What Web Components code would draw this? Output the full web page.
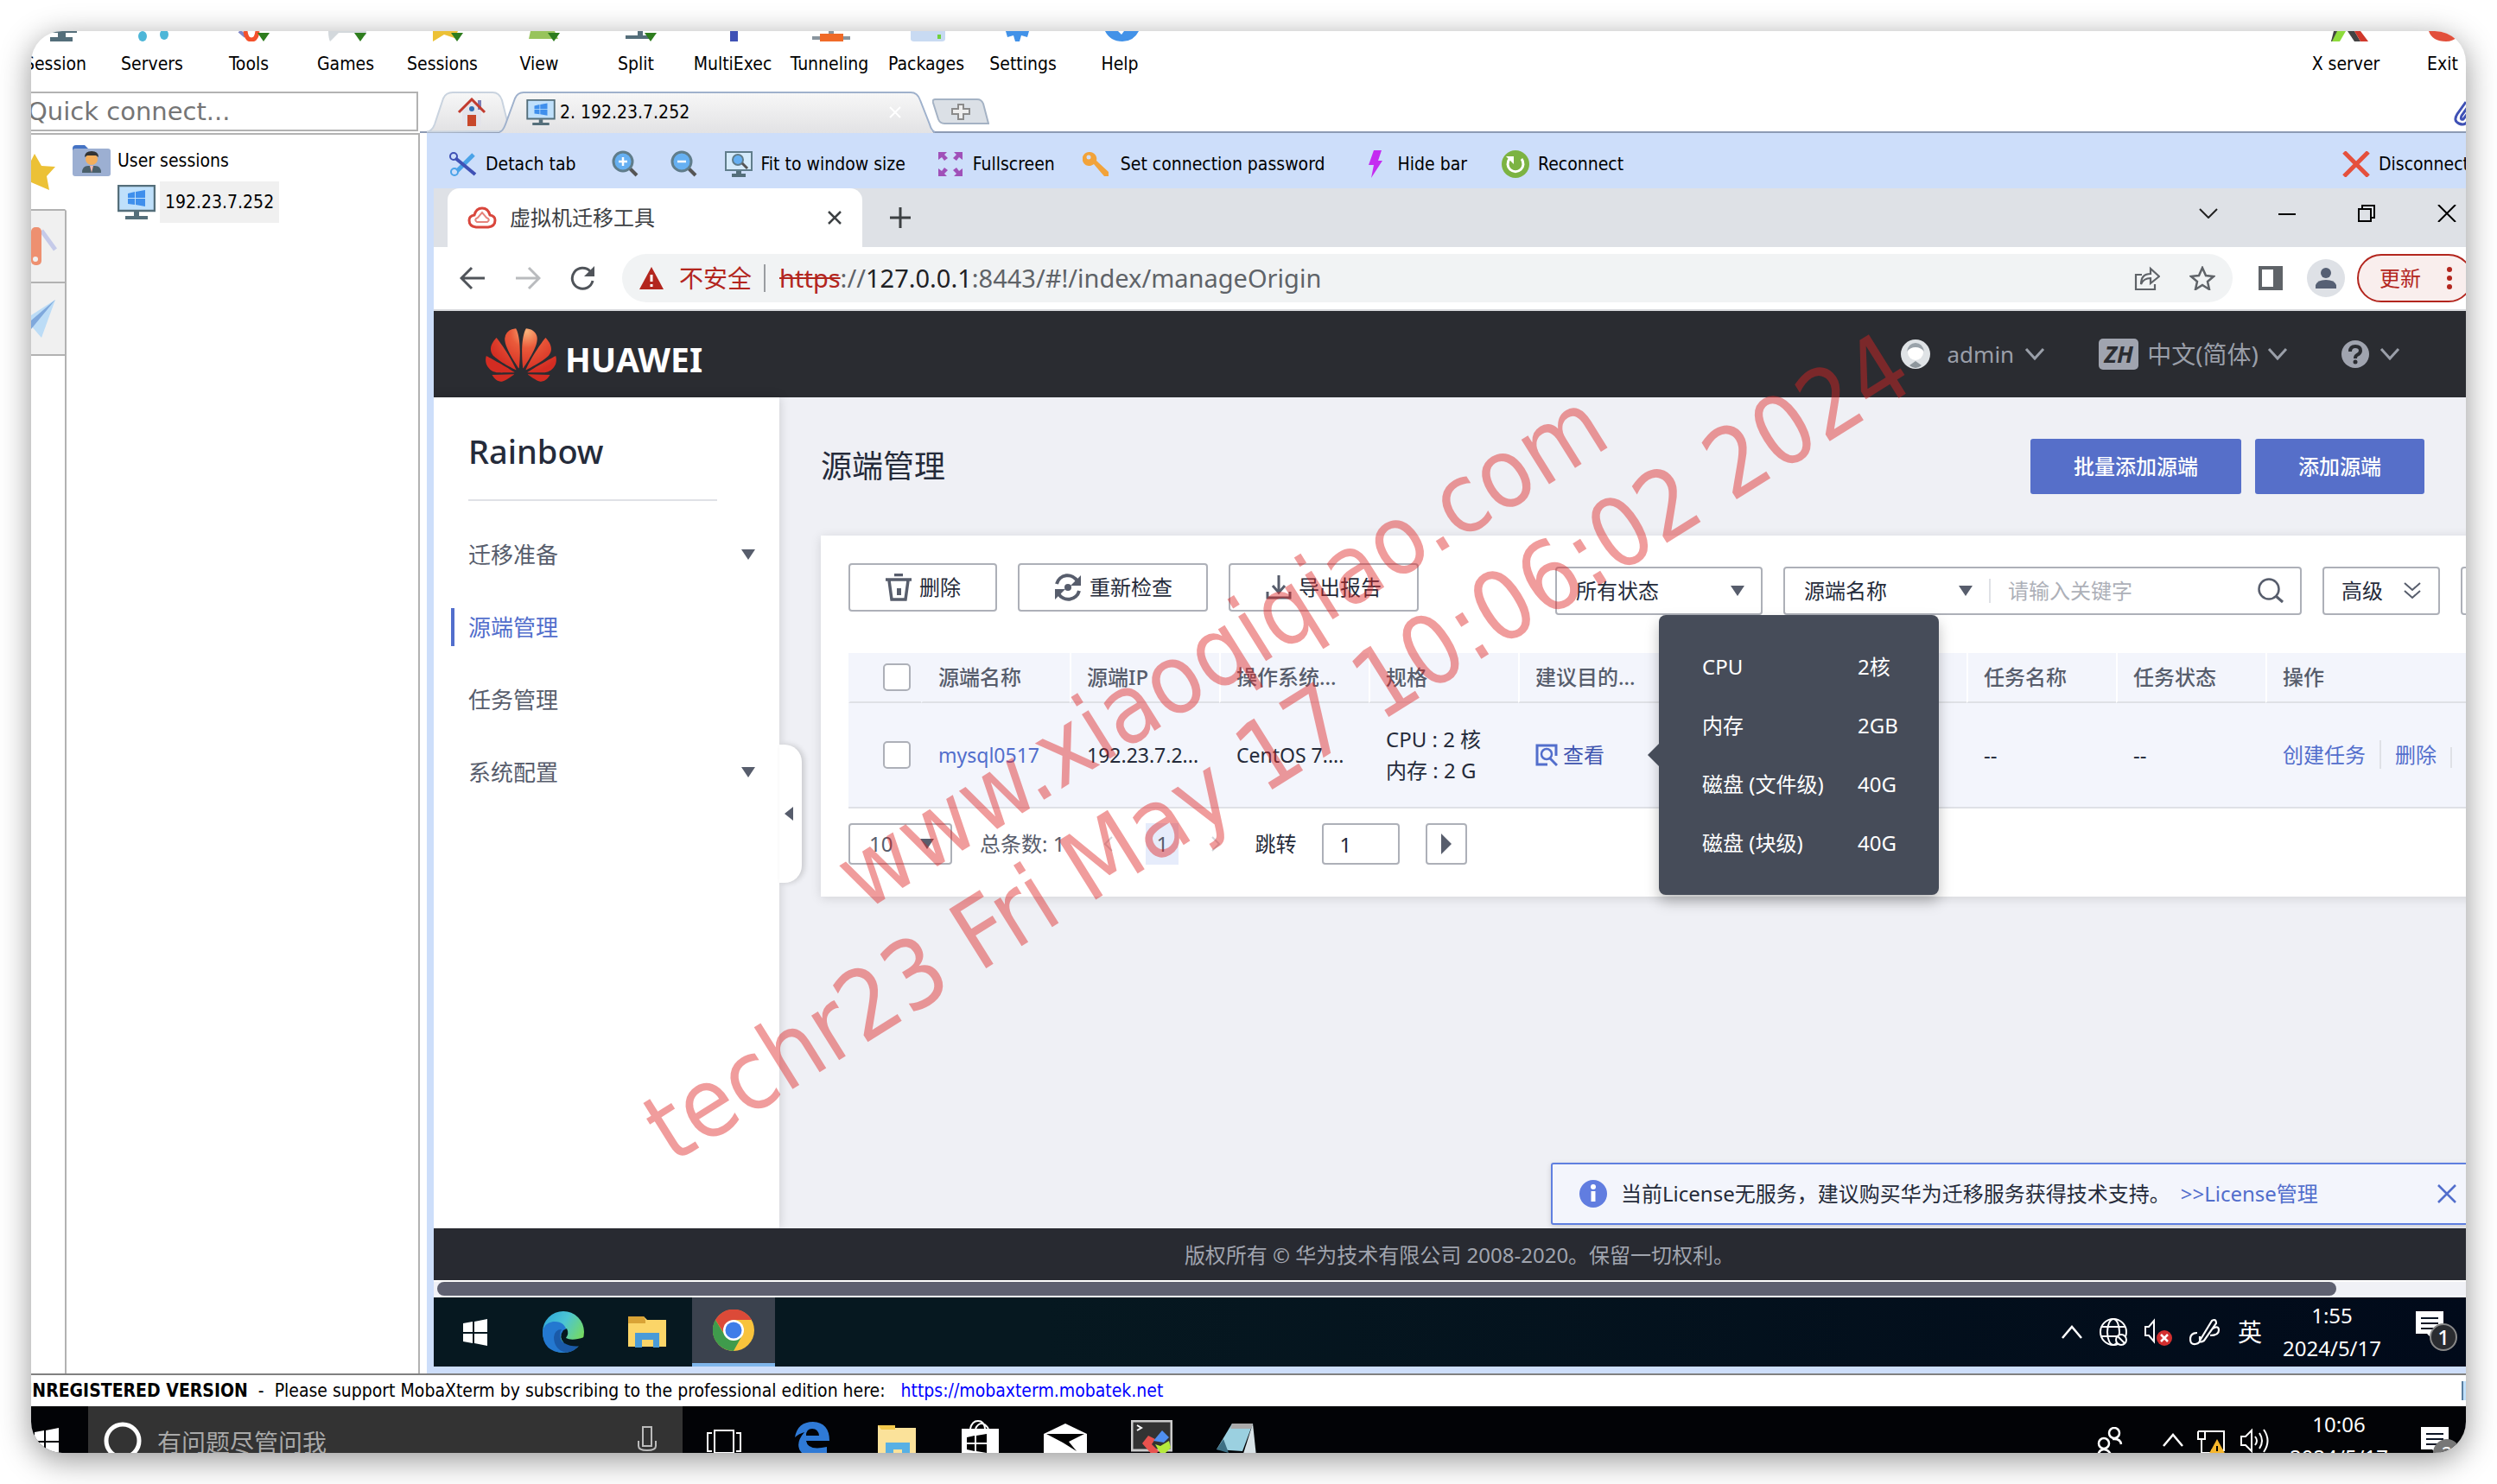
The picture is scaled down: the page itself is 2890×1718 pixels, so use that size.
<!DOCTYPE html>
<html lang="zh-CN">
<head>
<meta charset="utf-8">
<title>MobaXterm - 192.23.7.252</title>
<style>
html{height:100%}
body{margin:0;height:100vh;box-sizing:border-box;padding:36px;background:#fff;overflow:hidden;
--tahoma:"DejaVu Sans Condensed","DejaVu Sans",sans-serif;
--ui:"Noto Sans","Noto Sans CJK SC",sans-serif;
--blue:#cddefa;--link:#526ecc;--ink:#252b3a;--sub:#575d6c;--line:#adb0b8;
font-family:var(--ui);font-size:24px;line-height:32px;color:var(--ink)}
</style>
</head>
<body>
<moba-window></moba-window>
<script>
const base=`<style>*{box-sizing:border-box}svg{display:block;flex:none}
button,input,select{font:inherit;color:inherit;background:none;border:0;padding:0;margin:0;border-radius:0;outline:0}
button{display:flex;align-items:center;white-space:nowrap;flex:none}a{text-decoration:none}</style>`;
function define(name,html){
  const t=document.createElement('template');
  t.innerHTML=base+html;
  customElements.define(name,class extends HTMLElement{
    constructor(){super();this.attachShadow({mode:'open'}).append(t.content.cloneNode(true));}
  });
}
const svg=(w,h,body,box)=>`<svg width="${w}" height="${h}" viewBox="${box||`0 0 ${w} ${h}`}" aria-hidden="true">${body}</svg>`;
const caret=svg(16,12,'<path d="M0 0H16L8 12Z" fill="#575d6c"/>');
const flag='M2 6L13 4V16H2ZM15 4L30 1V16H15ZM2 18H13V29L2 27ZM15 18H30V32L15 29Z';
const monitor=(w,h)=>svg(w,h,`<path d="M1 1H43V30H1Z" fill="#bfe0fb" stroke="#546e7a" stroke-width="2.5"/><path d="M12 10L20 8V15H12ZM21 8L32 6V15H21ZM12 16H20V23L12 22ZM21 16H32V25L21 23Z" fill="#3f8fec"/><path d="M19 31H25V36H35V40H9V36H19Z" fill="#546e7a"/>`,'0 0 44 40');
const down='<path d="M38 2H52L45 12Z" fill="#2e7d1e"/>';

define('tool-item',`<style>:host{display:flex;flex-direction:column;align-items:center;width:112px;flex:none}
button{flex-direction:column;gap:8px;font:21px/36px var(--tahoma);color:#000}</style>
<button><slot name="icon"></slot><slot></slot></button>`);

const tool=(label,art)=>`<tool-item><svg slot="icon" style="display:block" width="56" height="12" viewBox="0 0 56 12" aria-hidden="true">${art}</svg>${label}</tool-item>`;
define('moba-toolbar',`<style>:host{display:flex;justify-content:space-between;height:70px;margin:0 -29px 0 -28px;flex:none}
div{display:flex}</style>
<div>${[
['Session','<path d="M16 0H53V2H40V7H48V12H22V7H31V2H16Z" fill="#546e7a"/>'],
['Servers','<ellipse cx="17" cy="6" rx="5" ry="6" fill="#4db6d8"/><ellipse cx="42" cy="4" rx="5" ry="6" fill="#4db6d8"/>'],
['Tools','<path d="M17 0L24 6" stroke="#8087c8" stroke-width="4"/><path d="M24 0Q25 10 31 10T38 0" fill="none" stroke="#f4512c" stroke-width="5"/>'+down],
['Games','<path d="M8 0H52V4Q46 10 40 2H20L10 12Q8 8 8 0Z" fill="#d3d8dc"/>'+down],
['Sessions','<path d="M17 0H46L42 8L30 4L17 12Z" fill="#ecc136"/>'+down],
['View','<path d="M18 0H46L50 9H16Z" fill="#98c45c"/>'+down],
['Split','<path d="M30 0H36V5H44V9H16V5H30Z" fill="#546e7a"/>'+down],
['MultiExec','<path d="M25 0H34V12H25Z" fill="#3f51b5"/>'],
['Tunneling','<path d="M8 6H52V10H8ZM27 0H33V4H27Z" fill="#8a959e"/><rect x="17" y="3" width="27" height="9" fill="#f06a28"/>'],
['Packages','<path d="M10 0H50V9Q50 12 46 12H14Q10 12 10 9Z" fill="#c8daf2"/><path d="M41 4H45V9H41Z" fill="#6fd13c"/>'],
['Settings','<path d="M8 0H35L33 7L26 5L24 12H19L17 5L10 7Z" fill="#4292e8"/>'],
['Help','<path d="M11 0H26L30 4L33 0H50Q44 12 31 12Q17 12 11 0Z" fill="#4292e8"/>']
].map(a=>tool(...a)).join('')}</div>
<div>${tool('X server','<path d="M16 0H28L21 12H11Z" fill="#8edb3c"/><path d="M14 0H18L12 12H11Z" fill="#444"/><path d="M30 0H38L45 12H38Z" fill="#444"/><path d="M38 0H45L54 12H45Z" fill="#d0382c"/>')}${tool('Exit','<path d="M12 0Q16 12 32 12Q40 12 46 6L40 0Z" fill="#e2503c"/>')}</div>`);

define('session-panel',`<style>:host{display:flex;flex-direction:column;width:450px;flex:none;color:#000;font:21px/48px var(--tahoma)}
input{width:452px;height:46px;border:2px solid #b2b2b2;border-left:0;font:29px/40px "DejaVu Sans",sans-serif;background:#fff;margin-left:-4px}
input::placeholder{color:#757575;opacity:1}
form{margin:0;height:48px;display:flex}
.panel{flex:1;display:flex;border:solid #b2b2b2;border-width:2px 2px 0 0}
.rail{width:41px;display:flex;flex-direction:column}
.rail button{height:84px;width:41px;background:#f0f0f0;border:solid #b2b2b2;border-width:0 2px 2px 0;overflow:hidden}
.rail button:first-child{height:88px;background:#fff;border-right-color:#fff}
.rail i{flex:1;border-right:2px solid #b2b2b2}
.tree{flex:1;padding:6px 0 0 7px;margin:0;list-style:none}
.tree div{display:flex;align-items:center;gap:8px;height:48px}
.tree .leaf{padding-left:52px;gap:5px}
.leaf span{background:#f0f0f0;padding:0 6px}</style>
<form><input aria-label="Quick connect" placeholder="Quick connect..."></form>
<div class="panel"><nav class="rail" aria-label="Side tabs">
<button aria-label="Sessions">${svg(28,42,'<path d="M4 0L12 14L28 15L18 26L21 42L0 33V8Z" fill="#ecc136"/>')}</button>
<button aria-label="Tools">${svg(30,48,'<path d="M12 6L28 28" stroke="#c5cae9" stroke-width="5"/><rect x="0" y="2" width="12" height="44" rx="5" fill="#ee9070"/><circle cx="5" cy="39" r="3" fill="#f0f0f0"/>')}</button>
<button aria-label="Macros">${svg(28,44,'<path d="M28 0L12 44L0 30V18Z" fill="#bcdcf6"/><path d="M28 0L0 34V24Z" fill="#7fa8dc"/>')}</button><i></i></nav>
<div class="tree" role="tree"><div role="treeitem">${svg(44,36,'<path d="M0 4Q0 0 4 0H14L18 4V12H0Z" fill="#4573c4"/><rect y="4" width="44" height="32" rx="3" fill="#9cafd2"/><circle cx="22" cy="16" r="7" fill="#f3ae5c"/><path d="M14 14Q14 7 22 7T30 14L27 12H17Z" fill="#333"/><path d="M11 32Q11 24 18 24H26Q33 24 33 32Z" fill="#4a5f6a"/><path d="M20 24H24L22 32Z" fill="#f4b8b0"/>')}<span>User sessions</span></div>
<div class="leaf" role="treeitem">${monitor(44,40)}<span>192.23.7.252</span></div></div></div>`);

define('moba-tabs',`<style>:host{display:flex;height:48px;flex:none;background:linear-gradient(#8d9bb4,#8d9bb4) bottom/100% 2px no-repeat #fff;padding-left:8px;color:#000;font:21px/48px var(--tahoma)}
.tab{display:grid;flex:none}.tab>*{grid-area:1/1}
.home{width:96px}.act{width:506px;margin-left:-14px}
.home button{justify-content:center;padding-left:8px}
.act .in{display:flex;align-items:center;gap:5px;padding:0 39px 0 33px}
.act .in button{margin-left:auto}
.add{margin:8px 0 0 -3px;align-self:flex-start}.clip{margin-left:auto;align-self:center;overflow:hidden;width:14px}</style>
<div class="tab home">${svg(96,48,'<defs><linearGradient id="g" x2="0" y2="1"><stop stop-color="#f7f7f7"/><stop offset="1" stop-color="#e2e2e4"/></linearGradient></defs><path d="M0 46.500Q6 46 9 38L19 8Q22 1 30 1H76Q84 1 87 10L96 46Z" fill="url(#g)" stroke="#c9d3df" stroke-width="2"/>')}<button aria-label="Home">${svg(34,34,'<path d="M6 14L17 4L28 14V33H6Z" fill="#e4e4ea"/><path d="M24 3H28V14H24Z" fill="#7d7fb8"/><path d="M2 17L17 2L32 17" fill="none" stroke="#c23b2e" stroke-width="3"/><rect x="12" y="20" width="10" height="13" fill="#c8482a"/><circle cx="17" cy="13" r="3" fill="#2f6fb5"/>')}</button></div>
<div class="tab act">${svg(506,48,'<defs><linearGradient id="g" x2="0" y2="1"><stop stop-color="#d9e7ff"/><stop offset="1" stop-color="#cddefa"/></linearGradient></defs><path d="M0 49Q6 46 9 38L20 8Q23 1 30 1H478Q486 1 489 10L500 38Q502 47 506 49Z" fill="url(#g)"/><path d="M2 47Q6 46 9 38L20 8Q23 1 30 1H478Q486 1 489 10L500 38Q502 45 506 47" fill="none" stroke="#9fb1cc" stroke-width="2"/>')}<div class="in">${monitor(34,30)}<span>2. 192.23.7.252</span><button aria-label="Close tab">${svg(14,14,'<path d="M1 1L13 13M13 1L1 13" stroke="#fff" stroke-width="2"/>')}</button></div></div>
<button class="add" aria-label="New tab">${svg(66,30,'<path d="M3 1H52Q57 1 59 6L65 29H14Q9 29 7 24L1 5Q0 1 3 1Z" fill="#dbe0e6" stroke="#a4b2c4" stroke-width="2"/><path d="M30 7H36V12H43V18H36V24H30V18H23V12H30Z" fill="#eee" stroke="#8b8b8b" stroke-width="2"/>')}</button>
<span class="clip">${svg(28,32,'<path d="M14 4L4 18Q-1 26 6 29T16 26L26 10M16 10L9 20Q7 25 11 24L20 12" fill="none" stroke="#3f51b5" stroke-width="3"/>')}</span>`);

define('rdp-bar',`<style>:host{display:flex;align-items:center;height:64px;flex:none;padding:8px 0 0 26px;background:var(--blue);color:#000;font:21px/48px var(--tahoma);overflow:hidden}
button{gap:10px;margin-right:36px}.tight{margin-right:32px}.wide{margin-right:40px}.key{gap:14px;margin-right:48px}.k{gap:16px}.d{margin:0 -4px 0 auto}</style>
<button class="wide">${svg(32,28,'<path d="M28 3L9 22" stroke="#4aa3e8" stroke-width="5"/><path d="M7 7L30 26" stroke="#3f51b5" stroke-width="4"/><circle cx="5" cy="5" r="4" fill="none" stroke="#3f51b5" stroke-width="2"/><circle cx="6" cy="23" r="4" fill="none" stroke="#4aa3e8" stroke-width="2"/>')}Detach tab</button>
<button aria-label="Zoom in">${svg(32,32,'<path d="M22 21L30 29" stroke="#555" stroke-width="4"/><circle cx="14" cy="13" r="11" fill="#66b0f2" stroke="#607d8b" stroke-width="3"/><path d="M14 8V18M9 13H19" stroke="#fff" stroke-width="2.500"/>')}</button>
<button class="tight" aria-label="Zoom out">${svg(32,32,'<path d="M22 21L30 29" stroke="#555" stroke-width="4"/><circle cx="14" cy="13" r="11" fill="#66b0f2" stroke="#607d8b" stroke-width="3"/><path d="M9 13H19" stroke="#fff" stroke-width="2.500"/>')}</button>
<button>${svg(32,30,'<rect x="1" y="1" width="30" height="21" fill="#d5ebfb" stroke="#607d8b" stroke-width="2"/><path d="M13 23H19V26H24V30H8V26H13Z" fill="#546e7a"/><circle cx="15" cy="10" r="6" fill="#66b0f2" stroke="#607d8b" stroke-width="2"/><path d="M20 14L26 20" stroke="#555" stroke-width="3"/>')}Fit to window size</button>
<button class="tight">${svg(32,28,'<path d="M2 0H12L9 3L13 7L9 10L6 6L2 9ZM30 0H20L23 3L19 7L23 10L26 6L30 9ZM2 28H12L9 25L13 21L9 18L6 22L2 19ZM30 28H20L23 25L19 21L23 18L26 22L30 19Z" fill="#a050b8"/>')}Fullscreen</button>
<button class="key">${svg(30,28,'<path d="M8 0A8 8 0 0 1 16 10L30 23V28H25L13 14A8 8 0 1 1 8 0Z" fill="#f2a33a"/><circle cx="7" cy="6" r="2.500" fill="#cddefa"/>')}Set connection password</button>
<button class="k wide">${svg(20,32,'<path d="M8 0H17L13 12H18L5 32L8 17H2Z" fill="#c42cf0"/>')}Hide bar</button>
<button>${svg(32,32,'<circle cx="16" cy="16" r="16" fill="#7cb342"/><path d="M9 10A9 9 0 1 0 23 10" fill="none" stroke="#fff" stroke-width="3"/><path d="M5 7H14V16Z" fill="#fff"/>')}Reconnect</button>
<button class="d">${svg(32,30,'<path d="M2 1L30 29M30 1L2 29" stroke="#e5503c" stroke-width="5"/>')}Disconnect</button>`);

define('chrome-tabs',`<style>:host{display:flex;align-items:center;height:68px;flex:none;background:#dee1e6;padding-left:16px;color:#3c4043}
.tab{display:flex;align-items:center;align-self:stretch;width:480px;background:#fff;border-radius:14px 14px 0 0;padding:0 23px 0 23px;gap:15px}
.tab button{margin-left:auto}
.new{margin-left:32px}.win{margin-left:auto;display:flex;gap:70px;padding:0 11px 10px 0;color:#111}</style>
<div class="tab">${svg(34,26,'<path d="M10 24Q2 23 2 16Q2 11 8 10Q10 2 17 2T26 10Q32 11 32 16Q32 23 24 24Z" fill="none" stroke="#d9463c" stroke-width="3"/><path d="M11 18Q7 15 12 13L17 7L22 13Q27 15 23 18Z" fill="#fff" stroke="#e6857d" stroke-width="2"/>')}<span>虚拟机迁移工具</span><button aria-label="Close">${svg(18,18,'<path d="M2 2L16 16M16 2L2 16" stroke="#3c4043" stroke-width="2.500"/>')}</button></div>
<button class="new" aria-label="New tab">${svg(24,24,'<path d="M12 0V24M0 12H24" stroke="#3c4043" stroke-width="3"/>')}</button>
<div class="win"><button aria-label="Search tabs">${svg(22,12,'<path d="M1 1L11 11L21 1" fill="none" stroke="#222" stroke-width="2"/>')}</button><button aria-label="Minimize">${svg(22,20,'<path d="M0 11H20" stroke="#000" stroke-width="2"/>')}</button><button aria-label="Restore">${svg(22,20,'<path d="M1 5H15V19H1ZM5 5V1H19V15H15" fill="none" stroke="#000" stroke-width="2"/>')}</button><button aria-label="Close window">${svg(22,20,'<path d="M1 0L21 20M21 0L1 20" stroke="#000" stroke-width="2"/>')}</button></div>`);

define('chrome-address',`<style>:host{display:flex;align-items:center;height:74px;flex:none;background:#fff;border-bottom:2px solid #d8dadd;padding-left:30px;overflow:hidden}
.nav{display:flex;gap:34px;margin-right:30px}
.omni{flex:1;display:flex;align-items:center;height:56px;border-radius:28px;background:#f1f3f4;padding:0 20px 0 20px;font-size:28px;color:#5f6368;white-space:nowrap}
.warn{margin-right:18px}.bad{color:#b3261e}.sep{width:2px;height:32px;background:#9a9da1;margin:0 16px 0 14px}
.url{flex:1;font-size:29px}.url b{font-weight:400;color:#202124}.url s{color:#b3261e}
.omni button+button{margin-left:34px}
.panel{margin:0 28px 0 30px}.me{margin-right:14px}
.up{height:56px;width:134px;border:2px solid #b3261e;border-radius:28px;background:#f9eeed;color:#b3261e;padding-left:24px;gap:30px;margin-right:-8px}</style>
<div class="nav"><button aria-label="Back">${svg(30,28,'<path d="M29 14H3M14 2L2 14L14 26" fill="none" stroke="#50545a" stroke-width="3"/>')}</button><button aria-label="Forward">${svg(30,28,'<path d="M1 14H27M16 2L28 14L16 26" fill="none" stroke="#b9bbbe" stroke-width="3"/>')}</button><button aria-label="Reload">${svg(30,28,'<path d="M26 17A12 12 0 1 1 23 6" fill="none" stroke="#50545a" stroke-width="3"/><path d="M28 0V12H16Z" fill="#50545a"/>')}</button></div>
<div class="omni" role="group" aria-label="Address"><span class="warn">${svg(28,26,'<path d="M14 0L28 26H0Z" fill="#b3261e"/><path d="M14 9V17M14 20V23" stroke="#fff" stroke-width="3"/>')}</span><span class="bad">不安全</span><span class="sep"></span><span class="url"><s>https</s>://<b>127.0.0.1</b>:8443/#!/index/manageOrigin</span>
<button aria-label="Share">${svg(30,30,'<path d="M9 11H2V28H24V22M8 22Q8 10 19 10V4L29 13L19 21V15Q11 15 8 22Z" fill="none" stroke="#5f6368" stroke-width="2.200"/>')}</button><button aria-label="Bookmark">${svg(30,28,'<path d="M15 2L19 11L28 12L21 18L23 27L15 22L7 27L9 18L2 12L11 11Z" fill="none" stroke="#5f6368" stroke-width="2.500"/>')}</button></div>
<button class="panel" aria-label="Side panel">${svg(28,28,'<path d="M0 0H28V28H0ZM4 4V24H17V4Z" fill="#5f6368" fill-rule="evenodd"/>')}</button>
<button class="me" aria-label="Profile">${svg(44,44,'<circle cx="22" cy="22" r="22" fill="#dee1e6"/><circle cx="22" cy="16" r="6" fill="#566074"/><path d="M10 34V30Q12 24 22 24T34 30V34Z" fill="#566074"/>')}</button>
<button class="up">更新${svg(6,28,'<circle cx="3" cy="4" r="3" fill="#b3261e"/><circle cx="3" cy="14" r="3" fill="#b3261e"/><circle cx="3" cy="24" r="3" fill="#b3261e"/>')}</button>`);

const chev=svg(24,16,'<path d="M2 2L12 13L22 2" fill="none" stroke="#9a9fa9" stroke-width="3"/>');
define('hw-header',`<style>:host{display:flex;align-items:center;justify-content:space-between;height:100px;flex:none;background:#2a2c31;color:#9a9fa9;padding:0 76px 0 60px;font-size:26px}
.logo{display:flex;align-items:center;gap:10px;color:#fff;padding-top:2px}
.logo b{font:700 39px/40px "Noto Sans",sans-serif;padding-top:10px}
.right{display:flex;gap:62px}.right button{gap:12px}.right .lang{gap:10px;font-size:28px}
i{font:italic 700 27px/36px "Noto Sans",sans-serif;background:#a0a4af;color:#2a2c31;border-radius:5px;width:46px;text-align:center}</style>
<div class="logo">${svg(82,62,'<defs><radialGradient id="h" gradientUnits="userSpaceOnUse" cx="14" cy="4" r="14"><stop stop-color="#fbb27a"/><stop offset=".4" stop-color="#ea5a3a"/><stop offset="1" stop-color="#d32c22"/></radialGradient></defs><path fill="url(#h)" d="M3.670 6.140S1.820 7.910 1.720 9.780v.350c.080 1.510 1.220 2.400 1.220 2.400 1.830 1.790 6.260 4.040 7.300 4.550 0 0 .060.030.100-.010l.020-.040v-.040C7.520 10.800 3.670 6.140 3.670 6.140zM9.650 18.600c-.020-.080-.100-.080-.100-.080l-7.380.260c.800 1.430 2.150 2.530 3.560 2.200.960-.250 3.160-1.780 3.880-2.300.060-.050.040-.090.040-.090zm.080-.780C6.490 15.630.210 12.280.210 12.280c-.150.460-.200.900-.210 1.300v.070c0 1.070.400 1.820.400 1.820.800 1.690 2.340 2.200 2.340 2.200.700.300 1.400.310 1.400.310.120.020 4.400 0 5.540 0 .050 0 .080-.050.080-.050v-.060c0-.030-.030-.050-.030-.050zM9.060 3.190a3.420 3.420 0 00-2.570 3.150v.410c.030.600.160 1.050.160 1.050.660 2.900 3.860 7.650 4.550 8.650.050.050.100.030.100.030a.100.100 0 00.060-.100c1.060-10.600-1.110-13.420-1.110-13.420-.320.020-1.190.230-1.190.230zm8.299 2.270s-.490-1.800-2.440-2.280c0 0-.570-.140-1.170-.220 0 0-2.180 2.810-1.120 13.430.010.070.060.080.060.080.070.030.100-.030.100-.030.720-1.030 3.900-5.760 4.550-8.640 0 0 .360-1.400.020-2.340zm-2.920 13.070s-.070 0-.090.050c0 0-.010.070.030.100.700.510 2.850 2 3.880 2.300 0 0 .160.050.430.060h.140c.690-.020 1.900-.370 3-2.260l-7.400-.250zm7.830-8.410c.140-2.060-1.940-3.970-1.940-3.980 0 0-3.850 4.660-6.670 10.800 0 0-.030.080.020.130l.040.010h.060c1.060-.530 5.460-2.770 7.280-4.540 0 0 1.150-.930 1.210-2.420zm1.520 2.140s-6.280 3.370-9.520 5.550c0 0-.050.040-.030.110 0 0 .030.060.070.060 1.160 0 5.560 0 5.670-.020 0 0 .570-.020 1.270-.290 0 0 1.560-.500 2.370-2.270 0 0 .730-1.450.170-3.140z"/>','0 2.900 24 18.200')}<b>HUAWEI</b></div>
<div class="right"><button>${svg(42,34,'<circle cx="17" cy="17" r="17" fill="#dfe3e6"/><circle cx="17" cy="15" r="9" fill="#fff"/><path d="M7 14Q9 4 17 4T27 14Q23 9 17 9T7 14Z" fill="#9aa3aa"/><path d="M10 30L17 25L24 30Q17 36 10 30Z" fill="#8d969c"/>')}admin${chev}</button>
<button class="lang"><i>ZH</i>中文(简体)${chev}</button>
<button aria-label="Help">${svg(32,32,'<circle cx="16" cy="16" r="16" fill="#a0a4af"/><path d="M10 13Q10 7 16 7T22 12Q22 15 18 17Q16 18 16 21" fill="none" stroke="#2a2c31" stroke-width="4"/><circle cx="16" cy="25" r="2.500" fill="#2a2c31"/>')}${chev}</button></div>`);

define('hw-sidebar',`<style>:host{display:block;position:relative;z-index:1;width:400px;flex:none;background:#fff;box-shadow:0 0 12px rgba(0,0,0,.16);padding-top:30px;color:var(--sub)}
h1{font:500 38px/64px var(--ui);color:var(--ink);margin:0 72px 20px 40px;padding-bottom:24px;border-bottom:2px solid #dfe1e6}
a{display:flex;align-items:center;justify-content:space-between;height:84px;padding:0 28px 0 40px;font-size:26px;color:inherit}
a.on{color:var(--link);background:linear-gradient(var(--link),var(--link)) 20px center/4px 44px no-repeat}
.fold{position:absolute;left:100%;top:402px;width:26px;height:160px;background:#fff;border-radius:0 20px 20px 0;box-shadow:3px 0 6px rgba(0,0,0,.16);padding-left:6px}</style>
<h1>Rainbow</h1>
<nav><a href="#prepare">迁移准备${caret}</a><a class="on" href="#origin">源端管理</a><a href="#task">任务管理</a><a href="#config">系统配置${caret}</a></nav>
<button class="fold" aria-label="Collapse">${svg(10,16,'<path d="M10 0V16L0 8Z" fill="#575d6c"/>')}</button>`);

define('drop-down',`<style>:host{display:grid;align-items:center;justify-items:end;height:56px;border:2px solid var(--line);border-radius:4px;background:#fff}
::slotted(select){grid-area:1/1;width:100%;height:100%;appearance:none}
svg{grid-area:1/1;margin-right:19px;pointer-events:none}</style><slot></slot>${caret}`);

define('info-tip',`<style>:host{display:block;position:absolute;z-index:3;left:1418px;top:352px;width:324px;padding:26px 0 26px 50px;background:#464c59;color:#fff;border-radius:8px;box-shadow:0 8px 16px rgba(0,0,0,.25);line-height:68px}
:host::before{content:"";position:absolute;right:100%;top:149px;border:solid transparent;border-width:13px 13px 13px 0;border-right-color:#464c59}
dl{display:grid;grid-template-columns:180px 1fr;margin:0}dd{margin:0}dt,dd{white-space:nowrap}</style>
<dl><dt>CPU</dt><dd>2核</dd><dt>内存</dt><dd>2GB</dd><dt>磁盘 (文件级)</dt><dd>40G</dd><dt>磁盘 (块级)</dt><dd>40G</dd></dl>`);

define('license-notice',`<style>:host{display:flex;align-items:center;position:absolute;z-index:2;right:-2px;bottom:4px;width:1061px;height:72px;background:#f3f5fc;border:2px solid #5f7fe0;border-radius:3px 0 0 3px;padding:0 11px 0 31px;box-shadow:0 2px 6px rgba(0,0,0,.15);white-space:nowrap}
span{margin:0 12px 0 16px}a{color:var(--link)}button{margin-left:auto}</style>
${svg(32,32,'<circle cx="16" cy="16" r="16" fill="#617de0"/><path d="M16 13V25" stroke="#fff" stroke-width="5"/><circle cx="16" cy="8" r="3" fill="#fff"/>')}<span>当前License无服务，建议购买华为迁移服务获得技术支持。</span><a href="#license">&gt;&gt;License管理</a><button aria-label="Dismiss">${svg(22,22,'<path d="M1 1L21 21M21 1L1 21" stroke="#526ecc" stroke-width="2.500"/>')}</button>`);

define('source-table',`<style>:host{display:block}
table{width:100%;table-layout:fixed;border-collapse:separate;border-spacing:0;background:#f3f5fc}
th,td{text-align:left;padding:0 0 0 18px;white-space:nowrap;border-bottom:2px solid #dfe1e6}
th{height:58px;font-weight:500;color:var(--sub);border-left:2px solid #fff}
th:first-child,th:nth-child(2){border-left:2px solid transparent}td{height:122px;padding-left:20px;line-height:36px}
td:nth-child(-n+4){font-size:23px}
th:first-child{padding-left:38px}td:first-child{padding-left:40px}
input{appearance:none;display:block;width:32px;height:32px;border:2px solid var(--line);border-radius:5px;background:#fff}
a{color:var(--link)}.ops a+a{border-left:2px solid #dfe1e6;margin-left:16px;padding-left:16px;line-height:24px}
.ops a:last-child{display:inline-block;height:24px;vertical-align:middle;padding:0}
.see{display:flex;gap:6px;align-items:center;color:#3f55b0}</style>
<table><colgroup><col style="width:84px"><col style="width:172px">${'<col style="width:173px">'.repeat(8)}<col></colgroup>
<thead><tr><th><input type="checkbox" aria-label="全选"></th><th>源端名称</th><th>源端IP</th><th>操作系统...</th><th>规格</th><th>建议目的...</th><th></th><th></th><th>任务名称</th><th>任务状态</th><th>操作</th></tr></thead>
<tbody><tr><td><input type="checkbox" aria-label="mysql0517"></td><td><a href="#mysql0517">mysql0517</a></td><td>192.23.7.2...</td><td>CentOS 7....</td><td>CPU : 2 核<br>内存 : 2 G</td><td><a class="see" href="#view">${svg(26,26,'<path d="M24 14V2H2V24H14" fill="none" stroke="#526ecc" stroke-width="3"/><circle cx="13" cy="12" r="6" fill="none" stroke="#526ecc" stroke-width="2.500"/><path d="M17 17L25 25" stroke="#526ecc" stroke-width="3"/>')}查看</a></td><td></td><td></td><td>--</td><td>--</td><td class="ops"><a href="#create">创建任务</a><a href="#delete">删除</a><a aria-hidden="true"></a></td></tr></tbody></table>`);

define('hw-main',`<style>:host{display:flex;flex-direction:column;position:relative;flex:1;min-width:0;background:#eff0f5;padding:0 0 0 48px}
header{display:flex;align-items:center;height:160px;padding:0 48px 0 0;flex:none}
h2{font:400 36px/64px var(--ui);margin:0 auto 0 0}
header button{height:64px;border-radius:3px;background:#566fc9;color:#fff;font-weight:500;padding:0 50px;margin-left:16px}
.card{background:#fff;margin-right:-80px;padding:32px 30px 36px 32px;box-shadow:0 2px 12px rgba(0,0,0,.12)}
.bar{display:flex;height:60px;gap:24px;margin-bottom:44px}
.bar>button{height:56px;border:2px solid var(--line);border-radius:4px;justify-content:center;gap:8px;width:220px}
.bar>button:first-child{width:172px}
.bar>.f{align-self:flex-end}
.bar>.more{width:136px;gap:24px}.bar>.last{width:56px}
select{padding-left:22px}
.st{width:240px;margin-left:auto}
.search{display:flex;align-items:center;width:600px;height:56px;border:2px solid var(--line);border-radius:4px;padding-right:19px}
.search drop-down{border:0;width:236px;height:52px}
.search input{flex:1;min-width:0;height:28px;border-left:2px solid #dfe1e6;padding-left:20px}
.search input::placeholder{color:#adb0b8;opacity:1}
.pager{display:flex;align-items:center;margin-top:16px;height:50px;color:var(--sub)}
.size{width:120px;height:48px}.total{margin:0 32px}
.pager button.p{width:38px;height:48px;justify-content:center}
.cur{background:#e6ecfb;margin:0 24px}
.go,.jump{border:2px solid var(--line)!important;border-radius:4px;height:48px;background:#fff}
.jump{width:90px;padding-left:18px;margin:0 30px}.go{width:48px;justify-content:center}label{display:flex;align-items:center;margin-left:26px;color:var(--ink)}</style>
<header><h2>源端管理</h2><button>批量添加源端</button><button>添加源端</button></header>
<section class="card"><div class="bar">
<button>${svg(32,32,'<path d="M11 1.500H21M1 7H31M5 8L8 30H24L27 8" fill="none" stroke="#575d6c" stroke-width="3.500"/><rect x="14" y="17" width="5" height="8" fill="#575d6c"/>')}删除</button>
<button>${svg(34,32,'<path d="M4 12A13 13 0 0 1 28 9M30 20A13 13 0 0 1 6 23" fill="none" stroke="#575d6c" stroke-width="4"/><path d="M32 2V14H20ZM2 30V18H14Z" fill="#575d6c"/><circle cx="17" cy="16" r="4" fill="#575d6c"/>')}重新检查</button>
<button>${svg(30,28,'<path d="M15 0V19M8 12L15 20L22 12M2 19V26H28V19" fill="none" stroke="#575d6c" stroke-width="3"/>')}导出报告</button>
<drop-down class="f st"><select aria-label="状态"><option>所有状态</option></select></drop-down>
<div class="search f"><drop-down><select aria-label="搜索字段"><option>源端名称</option></select></drop-down><input aria-label="关键字" placeholder="请输入关键字">${svg(30,30,'<circle cx="13" cy="13" r="11.500" fill="none" stroke="#575d6c" stroke-width="2.500"/><path d="M21 21L29 28" stroke="#575d6c" stroke-width="3"/>')}</div>
<button class="f more">高级${svg(20,20,'<path d="M1 1L10 9L19 1M1 10L10 18L19 10" fill="none" stroke="#575d6c" stroke-width="2"/>')}</button><button class="f last" aria-label="刷新"></button></div>
<source-table></source-table>
<div class="pager"><drop-down class="size"><select aria-label="每页条数"><option>10</option></select></drop-down><span class="total">总条数: 1</span>
<button class="p" aria-label="上一页">${svg(10,18,'<path d="M9 1L1 9L9 17" fill="none" stroke="#d3d5da" stroke-width="2"/>')}</button><button class="p cur">1</button><button class="p" aria-label="下一页">${svg(10,18,'<path d="M1 1L9 9L1 17" fill="none" stroke="#d3d5da" stroke-width="2"/>')}</button>
<label>跳转<input class="jump" value="1"></label><button class="go" aria-label="跳转">${svg(12,24,'<path d="M0 0L12 12L0 24Z" fill="#575d6c"/>')}</button></div></section>
<license-notice></license-notice>`);

define('hw-page',`<style>:host{display:flex;flex-direction:column;flex:1;min-height:0;position:relative;overflow:hidden}
.body{display:flex;flex:1;min-height:0}
footer{height:60px;flex:none;background:#282a31;color:#a0a4ae;display:flex;align-items:center;justify-content:center;padding:2px 0 0 22px;z-index:2}</style>
<hw-header></hw-header><div class="body"><hw-sidebar></hw-sidebar><hw-main></hw-main></div>
<footer>版权所有 © 华为技术有限公司 2008-2020。保留一切权利。</footer><info-tip></info-tip>`);

const note=svg(32,36,'<path d="M0 0H32V26H22V35L13 26H0Z" fill="#fff"/><path d="M6 8H26M6 14H26M6 20H26" stroke="#0a1424" stroke-width="2"/>');
define('remote-taskbar',`<style>:host{display:flex;align-items:center;height:80px;flex:none;background:linear-gradient(90deg,#061820 30%,#010a1a);color:#fff;padding-right:10px}
button{align-self:stretch;justify-content:center}
.start{margin-left:32px}.edge{margin-left:62px}.files{margin-left:51px}
.on{width:96px;background:#3b424e;border-bottom:4px solid #7fb5ea;margin-left:28px}
.tray{margin-left:auto;display:flex;align-items:center;gap:20px}
.lang{font-size:28px;margin-right:4px}
time{line-height:38px;text-align:center;margin:0 20px 0 0}.n{display:grid;align-self:center;margin-left:0;width:48px;height:48px;justify-items:start;align-items:start;align-content:start}
.n svg,.n b{grid-area:1/1}.n b{margin:14px 0 0 16px;width:32px;height:32px;border-radius:50%;background:#2a2c30;border:2px solid #888;font:500 24px/28px var(--ui)}</style>
<button class="start" aria-label="Start">${svg(32,32,`<path d="${flag}" fill="#fff"/>`)}</button>
<button class="edge" aria-label="Edge">${svg(48,48,'<defs><linearGradient id="e" x2="1" y2=".6"><stop stop-color="#2aa4dc"/><stop offset=".5" stop-color="#4cc4d4"/><stop offset="1" stop-color="#78dc5a"/></linearGradient></defs><circle cx="24" cy="24" r="24" fill="url(#e)"/><path d="M0 24Q1 14 12 12Q26 11 28 24Q20 24 21 32Q24 42 44 37Q37 48 24 48Q0 47 0 24Z" fill="#2478d0"/><path d="M13 30Q14 21 22 21Q18 27 22 34Q29 42 44 37Q38 47 27 48Q13 44 13 30Z" fill="#1a5aa8"/><path d="M28 20Q31 26 27 31Q34 35 48 30V40H46Q34 42 25 37Q18 30 24 22Z" fill="#061820"/>')}</button>
<button class="files" aria-label="Files">${svg(46,38,'<path d="M0 1H18L22 5H44V36H0Z" fill="#fbd568"/><path d="M0 1H18L20 5V9H0Z" fill="#d9a336"/><path d="M8 20H36V37H29V28H16V37H8Z" fill="#4a9bd8"/>')}</button>
<button class="on" aria-label="Chrome">${svg(48,48,'<circle cx="24" cy="24" r="24" fill="#f8c33c"/><path d="M3 12A24 24 0 0 1 45 12H24L12 26Z" fill="#dc4a38"/><path d="M3 12A24 24 0 0 0 24 48L34 30L14 30Z" fill="#3f9b4c"/><circle cx="24" cy="24" r="12" fill="#fff"/><circle cx="24" cy="24" r="9.500" fill="#3f7de8"/>')}</button>
<div class="tray">${svg(24,16,'<path d="M1 15L12 2L23 15" fill="none" stroke="#fff" stroke-width="2.500"/>')}
${svg(32,32,'<g fill="none" stroke="#fff" stroke-width="2"><circle cx="16" cy="16" r="15"/><ellipse cx="16" cy="16" rx="7" ry="15"/><path d="M2 10H30M2 21H30"/><circle cx="25" cy="25" r="6" fill="#020d1a"/><path d="M21 21L29 29"/></g>')}
${svg(32,32,'<path d="M1 10H5L11 3V27L5 20H1Z" fill="none" stroke="#fff" stroke-width="2"/><circle cx="23" cy="23" r="9" fill="#d32f2f"/><path d="M19 19L27 27M27 19L19 27" stroke="#fff" stroke-width="2.500"/>')}
${svg(36,32,'<path d="M9 17Q1 17 1 24T7 30T12 24V21M12 26L26 3Q31 0 31 6L17 26Q12 29 12 26ZM24 20Q34 20 34 14T27 12" fill="none" stroke="#fff" stroke-width="2.200"/>')}
<span class="lang">英</span><time>1:55<br>2024/5/17</time><button class="n" aria-label="Notifications">${note}<b>1</b></button></div>`);

define('remote-desktop',`<style>:host{display:flex;flex-direction:column;flex:1;min-height:0;border:solid var(--blue);border-width:0 0 8px 8px;margin-left:8px;overflow:hidden;background:#fff}
.scroll{height:20px;flex:none;background:#f0f1f6;border:solid #fff;border-width:2px 0;padding-left:4px}
.scroll i{display:block;width:93.6%;height:16px;border-radius:8px;background:#5e6070}</style>
<chrome-tabs></chrome-tabs><chrome-address></chrome-address><hw-page></hw-page><div class="scroll"><i></i></div><remote-taskbar></remote-taskbar>`);

define('status-bar',`<style>:host{display:flex;align-items:center;height:38px;flex:none;border-top:2px solid #808080;background:#fff;color:#000;font:21px/34px var(--tahoma);white-space:pre;overflow:hidden}
b{margin-left:-14px}a{color:#00f;margin-left:6px}i{margin-left:auto;width:5px;height:22px;background:#bfe0fb;border-left:2px solid #5a7fa0}</style>
<b>UNREGISTERED VERSION</b><span>  -  Please support MobaXterm by subscribing to the professional edition here:  </span><a href="#pro">https://mobaxterm.mobatek.net</a><i></i>`);

define('host-taskbar',`<style>:host{display:flex;align-items:flex-start;height:54px;flex:none;background:#020306;color:#fff;overflow:hidden}
.start{width:66px;height:54px;align-items:flex-start;padding:24px 0 0 2px}
.find{width:688px;height:54px;background:#333;display:flex;align-items:flex-start;padding:0 30px 0 18px;gap:18px}
.find>svg{margin-top:18px}
.find input{flex:1;height:40px;margin-top:22px;font-size:28px}.find input::placeholder{color:#a9a9a9;opacity:1}
.apps{display:flex;gap:51px;padding:16px 0 0 28px;align-items:flex-start}.apps .e{margin:0 4px 0 10px}
.tray{margin:0 -8px 0 auto;display:flex;gap:16px;padding:24px 0 0 0}.tray svg:first-child{margin-right:28px}
time{line-height:38px;text-align:center;margin:-22px 22px -60px 7px}
.n{display:grid;align-content:start;align-items:start}.n svg,.n b{grid-area:1/1}.n b{margin:14px 0 0 14px;width:32px;height:32px;border-radius:50%;background:#777;font:400 22px/32px var(--ui)}</style>
<button class="start" aria-label="Start">${svg(32,34,`<path d="${flag}" fill="#fff"/>`)}</button>
<div class="find">${svg(44,44,'<circle cx="22" cy="22" r="19" fill="none" stroke="#fff" stroke-width="5"/>')}<input aria-label="搜索" placeholder="有问题尽管问我">${svg(22,34,'<path d="M6 6H16V28H6ZM1 22V28Q1 33 11 33T21 28V22" fill="none" stroke="#bbb" stroke-width="2"/>')}</div>
<div class="apps"><button aria-label="Task view">${svg(40,40,'<path d="M9 12H31V38H9ZM6 15H1V36H6M34 15H39V36H34" fill="none" stroke="#fff" stroke-width="2"/>')}</button>
<button class="e" aria-label="Edge">${svg(42,44,'<path d="M1 20Q4 2 22 2Q41 3 41 24H14Q16 36 38 31V41Q20 48 9 38Q0 28 12 14Q5 16 1 20ZM14 18H29Q28 10 21 10T14 18Z" fill="#2f7ad6"/>')}</button>
<button aria-label="Files">${svg(46,40,'<path d="M0 6H20V9H44V40H0Z" fill="#fbe29a"/><path d="M0 6H20V11H4Z" fill="#f3c94c"/><path d="M9 26H37V40H28V34H18V40H9Z" fill="#58b0e4"/>')}</button>
<button aria-label="Store">${svg(44,42,'<path d="M0 10H43V42H0Z" fill="#fff"/><path d="M10 10Q12 1 19 1T27 10M16 10Q19 4 23 4T31 10" fill="none" stroke="#fff" stroke-width="2"/><path d="M6 20L15 18V26H6ZM17 18L29 16V26H17ZM6 28H15V36L6 34ZM17 28H29V38L17 36Z" fill="#000"/>')}</button>
<button aria-label="Mail">${svg(50,42,'<path d="M0 16L25 4L50 16V42H0Z" fill="#fff"/><path d="M3 16H47L29 25L38 36L22 26Z" fill="#000"/>')}</button>
<button aria-label="MobaXterm">${svg(48,42,'<rect x="1" y="1" width="46" height="34" fill="#333" stroke="#ccc" stroke-width="3"/><path d="M7 6L12 9L7 12" fill="none" stroke="#fff" stroke-width="2"/><path d="M20 18L28 22L24 28L32 36L26 42L13 27Z" fill="#e8524e"/><path d="M36 12L44 20L38 26L26 24Z" fill="#4f8ff0"/><path d="M28 28L34 30L44 24L46 32L36 42Z" fill="#b5ea3c"/>')}</button>
<button aria-label="Notepad">${svg(46,42,'<path d="M18 4H42L30 36L0 34Z" fill="#9bd0e0"/><path d="M18 4H42L40 10H16Z" fill="#aaa"/><path d="M42 4L46 42H30Z" fill="#d8e2e6"/><path d="M0 34L8 22L14 38Z" fill="#3d6f84"/>')}</button></div>
<div class="tray">${svg(32,34,'<g fill="none" stroke="#fff" stroke-width="2.500"><circle cx="20" cy="7" r="6"/><circle cx="8" cy="19" r="6"/><path d="M18 14Q27 13 28 20M1 34Q2 26 8 26T17 34"/></g>')}
${svg(24,24,'<path d="M1 22L12 9L23 22" fill="none" stroke="#fff" stroke-width="2.500"/>')}
${svg(34,34,'<path d="M1 5H31V27H16M1 5V14H9V5M5 14V30H20" fill="none" stroke="#fff" stroke-width="2"/><path d="M23 14L34 34H12Z" fill="#f6b62c"/><path d="M23 22V28M23 30V33" stroke="#000" stroke-width="2"/>')}
${svg(34,30,'<path d="M1 11H6L13 4V28L6 21H1ZM17 11Q21 16 17 21M22 7Q28 16 22 25M27 3Q36 16 27 29" fill="none" stroke="#fff" stroke-width="2"/>')}
<time>10:06<br>2024/5/17</time><button class="n" aria-label="Notifications">${note}<b>2</b></button></div>`);

define('page-watermark',`<style>:host{position:absolute;z-index:9;left:0;top:0;width:0;height:0;pointer-events:none;color:rgba(221,35,35,.45);font:111px/160px var(--tahoma);white-space:nowrap}
p{position:absolute;margin:0;transform-origin:0 118px;transform:rotate(-32deg)}
.a{left:964px;top:902px}.b{left:742px;top:1194px}</style>
<p class="a">www.xiaoqiqiao.com</p><p class="b">techr23 Fri May 17 10:06:02 2024</p>`);

define('moba-window',`<style>:host{display:flex;flex-direction:column;position:relative;height:100%;border-radius:36px;overflow:hidden;background:#fff;box-shadow:0 8px 36px rgba(0,0,0,.42)}
.work{display:flex;flex:1;min-height:0}.right{display:flex;flex-direction:column;flex:1;min-width:0}
rdp-bar{margin-left:8px}</style>
<moba-toolbar></moba-toolbar><div class="work"><session-panel></session-panel><div class="right"><moba-tabs></moba-tabs><rdp-bar></rdp-bar><remote-desktop></remote-desktop></div></div>
<status-bar></status-bar><host-taskbar></host-taskbar><page-watermark></page-watermark>`);
</script>
</body>
</html>
